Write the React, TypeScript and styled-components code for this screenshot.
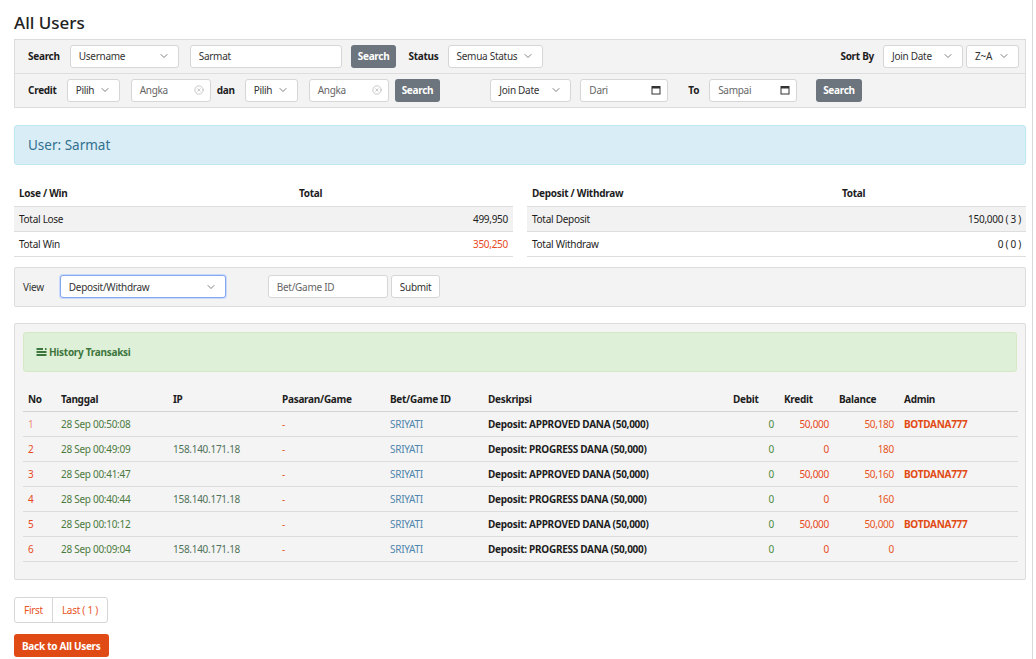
import React from "react";
import styled, { createGlobalStyle } from "styled-components";
import { ChevronDown, CircleX } from "lucide-react";

const Global = createGlobalStyle`
  html, body { margin: 0; padding: 0; background: #fff; }
  body { font-family: "Noto Sans", "Open Sans", sans-serif; font-size: 10px; letter-spacing: -0.28px; color: #1d1d1d; }
  * { box-sizing: border-box; }
  button { letter-spacing: inherit; }
`;

const Page = styled.div`
  width: 1033px;
  min-height: 659px;
  border-right: 1px solid #d9d9d9;
  padding: 12px 6px 0 14px;
  display: flex;
  flex-direction: column;
`;

const Title = styled.h1`
  margin: 0 0 5px 0;
  font-size: 17px;
  font-weight: 500;
  letter-spacing: 0;
  line-height: 22px;
  color: #222;
`;

const FilterPanel = styled.div`
  background: #f3f3f3;
  border: 1px solid #dcdcdc;
  display: flex;
  flex-direction: column;
`;

const FilterRow = styled.div<{ $top?: boolean }>`
  height: ${(p) => (p.$top ? 34 : 33)}px;
  display: flex;
  align-items: center;
  padding: 0 6px 1px 13px;
  border-top: ${(p) => (p.$top ? "1px solid #dedede" : "none")};
`;

const Label = styled.span<{ $ml?: number; $mr?: number }>`
  font-weight: 700;
  margin-left: ${(p) => p.$ml ?? 0}px;
  margin-right: ${(p) => p.$mr ?? 0}px;
`;

const SelectBox = styled.div<{ $w: number; $ml?: number; $focus?: boolean }>`
  width: ${(p) => p.$w}px;
  height: 23px;
  margin-left: ${(p) => p.$ml ?? 0}px;
  background: #fff;
  border: 1px solid ${(p) => (p.$focus ? "#86a8ee" : "#d6d6d6")};
  box-shadow: ${(p) => (p.$focus ? "0 0 0 1px #c9d9fb" : "none")};
  border-radius: 3px;
  display: flex;
  align-items: center;
  justify-content: space-between;
  padding: 0 8px 0 8px;
  color: #333;
  svg { color: #555; flex-shrink: 0; }
`;

const InputBox = styled.div<{ $w: number; $ml?: number; $muted?: boolean }>`
  width: ${(p) => p.$w}px;
  height: 23px;
  margin-left: ${(p) => p.$ml ?? 0}px;
  background: #fff;
  border: 1px solid #d6d6d6;
  border-radius: 3px;
  display: flex;
  align-items: center;
  justify-content: space-between;
  padding: 0 6px 0 8px;
  color: ${(p) => (p.$muted ? "#666" : "#333")};
  svg { color: #aaa; flex-shrink: 0; }
`;

const DarkButton = styled.button<{ $ml?: number }>`
  height: 23px;
  margin-left: ${(p) => p.$ml ?? 0}px;
  padding: 0 7px;
  background: #6c757d;
  color: #fff;
  border: none;
  border-radius: 3px;
  font-family: inherit;
  font-size: 10px;
  font-weight: 700;
`;

const Spacer = styled.div`
  flex: 1;
`;

const InfoAlert = styled.div`
  margin-top: 17px;
  height: 40px;
  background: #d9edf7;
  border: 1px solid #bce8f1;
  border-radius: 3px;
  color: #31708f;
  font-size: 13.5px;
  letter-spacing: 0;
  display: flex;
  align-items: center;
  padding-left: 13px;
`;

const StatsGrid = styled.div`
  margin-top: 15px;
  display: grid;
  grid-template-columns: 1fr 1fr;
  column-gap: 14px;
`;

const StatTable = styled.table`
  width: 100%;
  border-collapse: collapse;
  td, th {
    height: 25px;
    padding: 0 5px;
    text-align: left;
    border-bottom: 1px solid #dedede;
  }
  th { font-weight: 700; height: 26px; }
  tbody tr:nth-child(odd) td { background: #f2f2f2; }
`;

const Num = styled.td<{ $color?: string; $bold?: boolean }>`
  && { text-align: right; }
  color: ${(p) => p.$color ?? "#1d1d1d"};
  font-weight: ${(p) => (p.$bold ? 700 : 400)};
`;

const ViewPanel = styled.div`
  margin-top: 10px;
  height: 40px;
  background: #f3f3f3;
  border: 1px solid #dcdcdc;
  border-radius: 2px;
  display: flex;
  align-items: center;
  padding-left: 8px;
  color: #333;
`;

const LightButton = styled.button<{ $ml?: number }>`
  height: 23px;
  margin-left: ${(p) => p.$ml ?? 0}px;
  padding: 0 8px;
  background: #fff;
  border: 1px solid #d6d6d6;
  border-radius: 3px;
  font-family: inherit;
  font-size: 10px;
  color: #333;
`;

const HistoryPanel = styled.div`
  margin-top: 16px;
  background: #f4f4f4;
  border: 1px solid #dcdcdc;
  border-radius: 2px;
  padding: 8px 8px 17px 8px;
`;

const SuccessAlert = styled.div`
  height: 40px;
  background: #dff0d8;
  border: 1px solid #d6e9c6;
  border-radius: 3px;
  color: #3c763d;
  font-weight: 700;
  display: flex;
  align-items: center;
  gap: 2px;
  padding-left: 12px;
  margin-bottom: 15px;
`;

const HistTable = styled.table`
  width: 100%;
  border-collapse: collapse;
  table-layout: fixed;
  th, td {
    height: 25px;
    padding: 0 5px;
    text-align: left;
    border-bottom: 1px solid #dcdcdc;
    white-space: nowrap;
  }
  th { font-weight: 700; color: #1d1d1d; }
  thead th { border-bottom: 1px solid #d3d3d3; }
`;

const Cell = styled.td<{ $color?: string; $bold?: boolean; $right?: boolean }>`
  color: ${(p) => p.$color ?? "#1d1d1d"};
  font-weight: ${(p) => (p.$bold ? 700 : 400)};
  && { text-align: ${(p) => (p.$right ? "right" : "left")}; }
`;

const Pager = styled.div`
  margin-top: 17px;
  display: flex;
  align-self: flex-start;
  border: 1px solid #d6d6d6;
  border-radius: 3px;
  height: 26px;
  background: #fff;
`;

const PageLink = styled.span<{ $sep?: boolean }>`
  display: flex;
  align-items: center;
  padding: 0 9px;
  color: #e8541e;
  border-left: ${(p) => (p.$sep ? "1px solid #d6d6d6" : "none")};
`;

const BackButton = styled.button`
  margin-top: 11px;
  align-self: flex-start;
  height: 23px;
  padding: 0 8px;
  background: #e04a14;
  color: #fff;
  border: none;
  border-radius: 3px;
  font-family: inherit;
  font-size: 10px;
  font-weight: 700;
`;

const Chev = () => <ChevronDown size={12} strokeWidth={1.5} />;

const CalIcon = () => (
  <svg width="10" height="10" viewBox="0 0 10 10">
    <rect x="1" y="1.5" width="8" height="7.5" fill="none" stroke="#333" strokeWidth="1" />
    <rect x="1" y="1.5" width="8" height="2" fill="#333" />
  </svg>
);

const MoneyIcon = () => (
  <svg width="11" height="10" viewBox="0 0 11 10">
    <rect x="0.5" y="1" width="10" height="2" fill="#3c763d" />
    <rect x="0.5" y="4" width="10" height="2" fill="#3c763d" />
    <rect x="0.5" y="7" width="10" height="2" fill="#3c763d" />
    <rect x="7" y="0" width="2" height="3" fill="#dff0d8" />
  </svg>
);

const rows = [
  { no: "1", noColor: "#f08a7a", t: "28 Sep 00:50:08", ip: "", d: "Deposit: APPROVED DANA (50,000)", k: "50,000", b: "50,180", a: "BOTDANA777" },
  { no: "2", noColor: "#e8491d", t: "28 Sep 00:49:09", ip: "158.140.171.18", d: "Deposit: PROGRESS DANA (50,000)", k: "0", b: "180", a: "" },
  { no: "3", noColor: "#e8491d", t: "28 Sep 00:41:47", ip: "", d: "Deposit: APPROVED DANA (50,000)", k: "50,000", b: "50,160", a: "BOTDANA777" },
  { no: "4", noColor: "#e8491d", t: "28 Sep 00:40:44", ip: "158.140.171.18", d: "Deposit: PROGRESS DANA (50,000)", k: "0", b: "160", a: "" },
  { no: "5", noColor: "#e8491d", t: "28 Sep 00:10:12", ip: "", d: "Deposit: APPROVED DANA (50,000)", k: "50,000", b: "50,000", a: "BOTDANA777" },
  { no: "6", noColor: "#e8491d", t: "28 Sep 00:09:04", ip: "158.140.171.18", d: "Deposit: PROGRESS DANA (50,000)", k: "0", b: "0", a: "" },
];

const colWidths = [33, 112, 109, 108, 98, 245, 51, 55, 65, 119];

export default function App() {
  return (
    <>
      <Global />
      <Page>
        <Title>All Users</Title>
        <FilterPanel>
          <FilterRow>
            <Label>Search</Label>
            <SelectBox $w={109} $ml={10}>Username<Chev /></SelectBox>
            <InputBox $w={152} $ml={11}>Sarmat</InputBox>
            <DarkButton $ml={9}>Search</DarkButton>
            <Label $ml={12}>Status</Label>
            <SelectBox $w={95} $ml={9}>Semua Status<Chev /></SelectBox>
            <Spacer />
            <Label>Sort By</Label>
            <SelectBox $w={80} $ml={9}>Join Date<Chev /></SelectBox>
            <SelectBox $w={53} $ml={3}>Z~A<Chev /></SelectBox>
          </FilterRow>
          <FilterRow $top>
            <Label>Credit</Label>
            <SelectBox $w={53} $ml={10}>Pilih<Chev /></SelectBox>
            <InputBox $w={80} $ml={11} $muted>Angka<CircleX size={10} strokeWidth={1.5} /></InputBox>
            <Label $ml={6}>dan</Label>
            <SelectBox $w={53} $ml={10}>Pilih<Chev /></SelectBox>
            <InputBox $w={80} $ml={11} $muted>Angka<CircleX size={10} strokeWidth={1.5} /></InputBox>
            <DarkButton $ml={6}>Search</DarkButton>
            <SelectBox $w={81} $ml={50}>Join Date<Chev /></SelectBox>
            <InputBox $w={88} $ml={9} $muted>Dari<CalIcon /></InputBox>
            <Label $ml={20}>To</Label>
            <InputBox $w={88} $ml={10} $muted>Sampai<CalIcon /></InputBox>
            <DarkButton $ml={19}>Search</DarkButton>
          </FilterRow>
        </FilterPanel>

        <InfoAlert>User: Sarmat</InfoAlert>

        <StatsGrid>
          <StatTable>
            <colgroup><col style={{ width: 280 }} /><col /></colgroup>
            <thead><tr><th>Lose / Win</th><th>Total</th></tr></thead>
            <tbody>
              <tr><td>Total Lose</td><Num>499,950</Num></tr>
              <tr><td>Total Win</td><Num $color="#e8491d">350,250</Num></tr>
            </tbody>
          </StatTable>
          <StatTable>
            <colgroup><col style={{ width: 310 }} /><col /></colgroup>
            <thead><tr><th>Deposit / Withdraw</th><th>Total</th></tr></thead>
            <tbody>
              <tr><td>Total Deposit</td><Num>150,000 ( 3 )</Num></tr>
              <tr><td>Total Withdraw</td><Num>0 ( 0 )</Num></tr>
            </tbody>
          </StatTable>
        </StatsGrid>

        <ViewPanel>
          View
          <SelectBox $w={166} $ml={16} $focus>Deposit/Withdraw<Chev /></SelectBox>
          <InputBox $w={120} $ml={42} $muted>Bet/Game ID</InputBox>
          <LightButton $ml={3}>Submit</LightButton>
        </ViewPanel>

        <HistoryPanel>
          <SuccessAlert><MoneyIcon />History Transaksi</SuccessAlert>
          <HistTable>
            <colgroup>
              {colWidths.map((w, i) => <col key={i} style={{ width: w }} />)}
            </colgroup>
            <thead>
              <tr>
                <th>No</th><th>Tanggal</th><th>IP</th><th>Pasaran/Game</th><th>Bet/Game ID</th>
                <th>Deskripsi</th><th>Debit</th><th>Kredit</th><th>Balance</th><th>Admin</th>
              </tr>
            </thead>
            <tbody>
              {rows.map((r) => (
                <tr key={r.no}>
                  <Cell $color={r.noColor}>{r.no}</Cell>
                  <Cell $color="#4b7a3e">{r.t}</Cell>
                  <Cell $color="#4f7258">{r.ip}</Cell>
                  <Cell $color="#e8541e">-</Cell>
                  <Cell $color="#4f86ad">SRIYATI</Cell>
                  <Cell $bold>{r.d}</Cell>
                  <Cell $right $color="#4b8a3e">0</Cell>
                  <Cell $right $color="#e8491d">{r.k}</Cell>
                  <Cell $right $color="#e8541e">{r.b}</Cell>
                  <Cell $bold $color="#e24a14">{r.a}</Cell>
                </tr>
              ))}
            </tbody>
          </HistTable>
        </HistoryPanel>

        <Pager>
          <PageLink>First</PageLink>
          <PageLink $sep>Last ( 1 )</PageLink>
        </Pager>
        <BackButton>Back to All Users</BackButton>
      </Page>
    </>
  );
}
